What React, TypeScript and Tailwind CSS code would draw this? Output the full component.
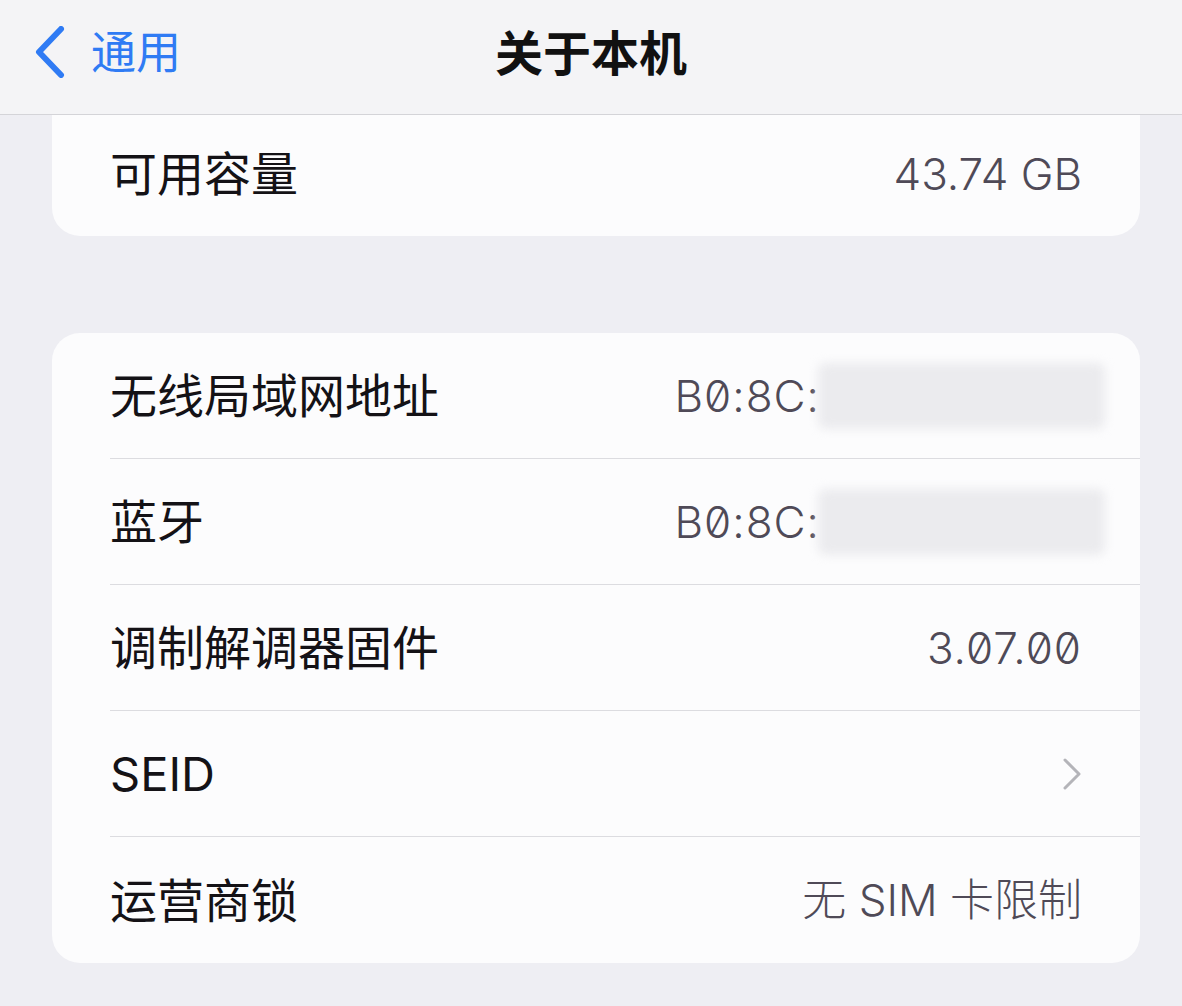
import type { ReactNode } from "react";

const cjk = "font-['Inter','Noto_Sans_CJK_SC',sans-serif]";

function Row({ label, children, last }: { label: string; children?: ReactNode; last?: boolean }) {
  return (
    <div className="pl-[58px]">
      <div className={`flex h-[126px] items-center justify-between pr-[58px] ${last ? "" : "border-b border-[#dcdce0]"}`}>
        <span className="text-[47px] leading-none text-[#141216]">{label}</span>
        {children}
      </div>
    </div>
  );
}

function Masked() {
  return (
    <div className="flex items-center text-[44px] leading-none font-light text-[#4f4a57]">
      <span className="slashed-zero tracking-[1px]">B0:8C:</span>
      <span className="-mr-[23px] ml-[-2px] h-[66px] w-[287px] rounded-lg bg-[#ebebee] blur-[5px]" />
    </div>
  );
}

export default function App() {
  return (
    <div className={`flex h-[1006px] w-[1182px] flex-col overflow-hidden bg-[#eeeef3] ${cjk}`}>
      <header className="relative flex h-[115px] flex-none items-center border-b border-[#d4d4d8] bg-[#f4f4f6] pb-[10px]">
        <div className="flex items-center pl-[35px] text-[#2f7bf4]">
          <svg width="30" height="52" viewBox="0 0 30 52" fill="none">
            <polyline points="26,3 4,26 26,49" stroke="currentColor" strokeWidth="6" strokeLinecap="round" strokeLinejoin="round" />
          </svg>
          <span className="ml-[26px] text-[45px] leading-none">通用</span>
        </div>
        <h1 className="absolute left-1/2 top-[30px] -translate-x-1/2 text-[48px] font-bold leading-none text-[#111]">关于本机</h1>
      </header>

      <div className="ml-[52px] mr-[42px]">
        <div className="flex h-[121px] items-center justify-between rounded-b-[28px] bg-[#fcfcfd] px-[58px] pb-[4px]">
          <span className="text-[47px] leading-none text-[#141216]">可用容量</span>
          <span className="text-[44px] leading-none font-light text-[#4f4a57]">43.74 GB</span>
        </div>

        <div className="mt-[97px] overflow-hidden rounded-[28px] bg-[#fcfcfd]">
          <Row label="无线局域网地址">
            <Masked />
          </Row>
          <Row label="蓝牙">
            <Masked />
          </Row>
          <Row label="调制解调器固件">
            <span className="slashed-zero text-[44px] leading-none font-light tracking-[1px] text-[#4f4a57]">3.07.00</span>
          </Row>
          <Row label="SEID">
            <svg width="20" height="32" viewBox="0 0 20 32" fill="none">
              <polyline points="3,2 17,16 3,30" stroke="#b4b4b9" strokeWidth="3" strokeLinecap="round" strokeLinejoin="round" />
            </svg>
          </Row>
          <Row label="运营商锁" last>
            <span className="text-[44px] leading-none font-light text-[#4f4a57]">无 SIM 卡限制</span>
          </Row>
        </div>
      </div>
    </div>
  );
}
